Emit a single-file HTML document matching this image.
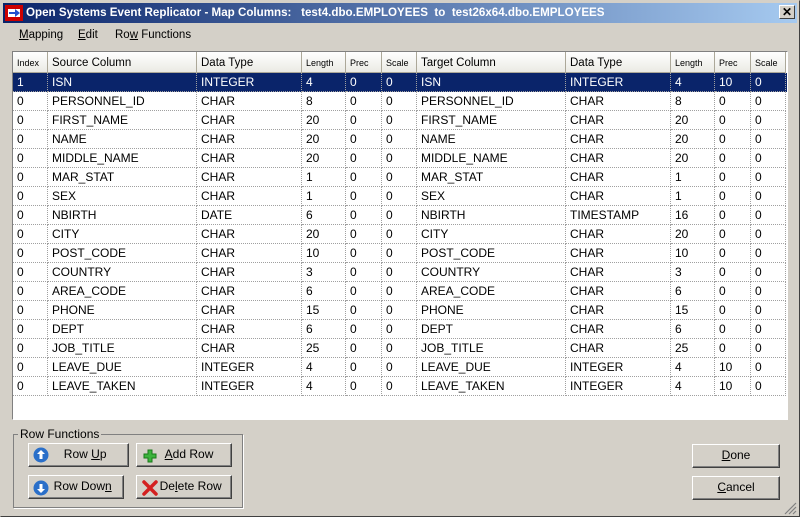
<!DOCTYPE html>
<html><head><style>
*{box-sizing:border-box;margin:0;padding:0}
body{width:800px;height:517px;background:#d4d0c8;font-family:"Liberation Sans",sans-serif;font-size:12px;position:relative;overflow:hidden}
.win{position:absolute;left:0;top:0;width:800px;height:517px;border:1px solid #404040;border-top-color:#d4d0c8;border-left-color:#d4d0c8}
.title{position:absolute;left:3px;top:3px;width:794px;height:20px;background:linear-gradient(to right,#0a246a,#a6caf0);color:#fff;font-weight:bold;font-size:11.6px;line-height:20px;padding-left:23px;white-space:pre}
.close{position:absolute;right:5px;top:5px;width:16px;height:14px;background:#d4d0c8;border:1px solid;border-color:#fff #404040 #404040 #fff;font-size:12px;line-height:12px;text-align:center;color:#000;font-weight:bold}
.menu span{position:absolute;top:29px;font-size:11.5px}
.grid{position:absolute;left:12px;top:51px;width:776px;height:369px;background:#fff;border:1px solid;border-color:#808080 #fff #fff #808080}
.hd{position:absolute;top:0;height:21px;background:linear-gradient(#fff,#ebeae4);border-right:1px solid #aca899;border-bottom:1px solid #aca899;padding-left:4px;line-height:22px;font-size:11.5px}
.hd.s{font-size:9px}
.row{position:absolute;left:0;height:19px;width:774px}
.c{position:absolute;top:0;height:19px;line-height:19px;padding-left:4px;border-right:1px dotted #a0a0a0;border-bottom:1px dotted #a0a0a0;font-size:12px;white-space:nowrap}
.sel{background:#0a246a;color:#fff}
.btn{position:absolute;background:#d4d0c8;border:1px solid;border-color:#fff #404040 #404040 #fff;box-shadow:inset -1px -1px #808080;text-align:center;line-height:21px;font-size:12px}
.grp{position:absolute;left:13px;top:434px;width:230px;height:74px;border:1px solid #808080;box-shadow:1px 1px #fff}
.grp span{position:absolute;left:4px;top:-8px;background:#d4d0c8;padding:0 2px;font-size:12px}
</style></head><body>
<div class="win"></div>
<div class="title">Open Systems Event Replicator - Map Columns:   test4.dbo.EMPLOYEES  to  test26x64.dbo.EMPLOYEES</div>
<svg style="position:absolute;left:5px;top:5px" width="18" height="16"><rect x="0" y="0" width="18" height="16" fill="#c00"/><rect x="3" y="4" width="12" height="8" fill="#fff"/><path d="M4 7h6v-3l5 4-5 4v-3H4z" fill="#2050d0"/></svg>
<div class="close">✕</div>
<div class="menu"><span style="left:19px"><u>M</u>apping</span><span style="left:78px"><u>E</u>dit</span><span style="left:115px">Ro<u>w</u> Functions</span></div>
<div class="grid" id="g"></div>
<div class="grp"><span>Row Functions</span></div>
<div class="btn" style="left:28px;top:443px;width:101px;height:24px"><svg style="position:absolute;left:4px;top:3px" width="16" height="16"><circle cx="8" cy="8" r="7.5" fill="#2a6fc9"/><path d="M8 3l4 4h-2.5v5h-3v-5H4z" fill="#fff"/></svg>&nbsp;&nbsp;&nbsp;&nbsp;Row <u>U</u>p</div>
<div class="btn" style="left:136px;top:443px;width:96px;height:24px"><svg style="position:absolute;left:6px;top:5px" width="14" height="14"><path d="M5 1h4v4h4v4h-4v4h-4v-4h-4v-4h4z" fill="#3cb33c" stroke="#1a7a1a"/></svg>&nbsp;&nbsp;&nbsp;<u>A</u>dd Row</div>
<div class="btn" style="left:28px;top:475px;width:96px;height:24px"><svg style="position:absolute;left:4px;top:4px" width="16" height="16"><circle cx="8" cy="8" r="7.5" fill="#2a6fc9"/><path d="M8 13l4-4h-2.5v-5h-3v5H4z" fill="#fff"/></svg>&nbsp;&nbsp;&nbsp;&nbsp;Row Dow<u>n</u></div>
<div class="btn" style="left:136px;top:475px;width:96px;height:24px"><svg style="position:absolute;left:4px;top:3px" width="18" height="18"><path d="M3 3L15 15M15 3L3 15" stroke="#d42020" stroke-width="3.5" stroke-linecap="round"/></svg>&nbsp;&nbsp;&nbsp;&nbsp;De<u>l</u>ete Row</div>
<div class="btn" style="left:692px;top:444px;width:88px;height:24px"><u>D</u>one</div>
<div class="btn" style="left:692px;top:476px;width:88px;height:24px"><u>C</u>ancel</div>
<svg style="position:absolute;left:784px;top:502px" width="13" height="13"><path d="M12 1L1 12M12 5L5 12M12 9L9 12" stroke="#808080" stroke-width="1.2"/></svg>
<script>
var W=[35,149,105,44,36,35,149,105,44,36,35];
var H=["Index","Source Column","Data Type","Length","Prec","Scale","Target Column","Data Type","Length","Prec","Scale"];
var S=[1,0,0,1,1,1,0,0,1,1,1];
var R=[["1","ISN","INTEGER","4","0","0","ISN","INTEGER","4","10","0"],
["0","PERSONNEL_ID","CHAR","8","0","0","PERSONNEL_ID","CHAR","8","0","0"],
["0","FIRST_NAME","CHAR","20","0","0","FIRST_NAME","CHAR","20","0","0"],
["0","NAME","CHAR","20","0","0","NAME","CHAR","20","0","0"],
["0","MIDDLE_NAME","CHAR","20","0","0","MIDDLE_NAME","CHAR","20","0","0"],
["0","MAR_STAT","CHAR","1","0","0","MAR_STAT","CHAR","1","0","0"],
["0","SEX","CHAR","1","0","0","SEX","CHAR","1","0","0"],
["0","NBIRTH","DATE","6","0","0","NBIRTH","TIMESTAMP","16","0","0"],
["0","CITY","CHAR","20","0","0","CITY","CHAR","20","0","0"],
["0","POST_CODE","CHAR","10","0","0","POST_CODE","CHAR","10","0","0"],
["0","COUNTRY","CHAR","3","0","0","COUNTRY","CHAR","3","0","0"],
["0","AREA_CODE","CHAR","6","0","0","AREA_CODE","CHAR","6","0","0"],
["0","PHONE","CHAR","15","0","0","PHONE","CHAR","15","0","0"],
["0","DEPT","CHAR","6","0","0","DEPT","CHAR","6","0","0"],
["0","JOB_TITLE","CHAR","25","0","0","JOB_TITLE","CHAR","25","0","0"],
["0","LEAVE_DUE","INTEGER","4","0","0","LEAVE_DUE","INTEGER","4","10","0"],
["0","LEAVE_TAKEN","INTEGER","4","0","0","LEAVE_TAKEN","INTEGER","4","10","0"]];
var h="",x=0;
for(var i=0;i<11;i++){h+='<div class="hd'+(S[i]?' s':'')+'" style="left:'+x+'px;width:'+W[i]+'px">'+H[i]+'</div>';x+=W[i];}
for(var r=0;r<R.length;r++){x=0;h+='<div class="row'+(r==0?' sel':'')+'" style="top:'+(21+r*19)+'px">';
for(i=0;i<11;i++){h+='<div class="c" style="left:'+x+'px;width:'+W[i]+'px">'+R[r][i]+'</div>';x+=W[i];}h+='</div>';}
document.getElementById("g").innerHTML=h;
</script>
</body></html>
